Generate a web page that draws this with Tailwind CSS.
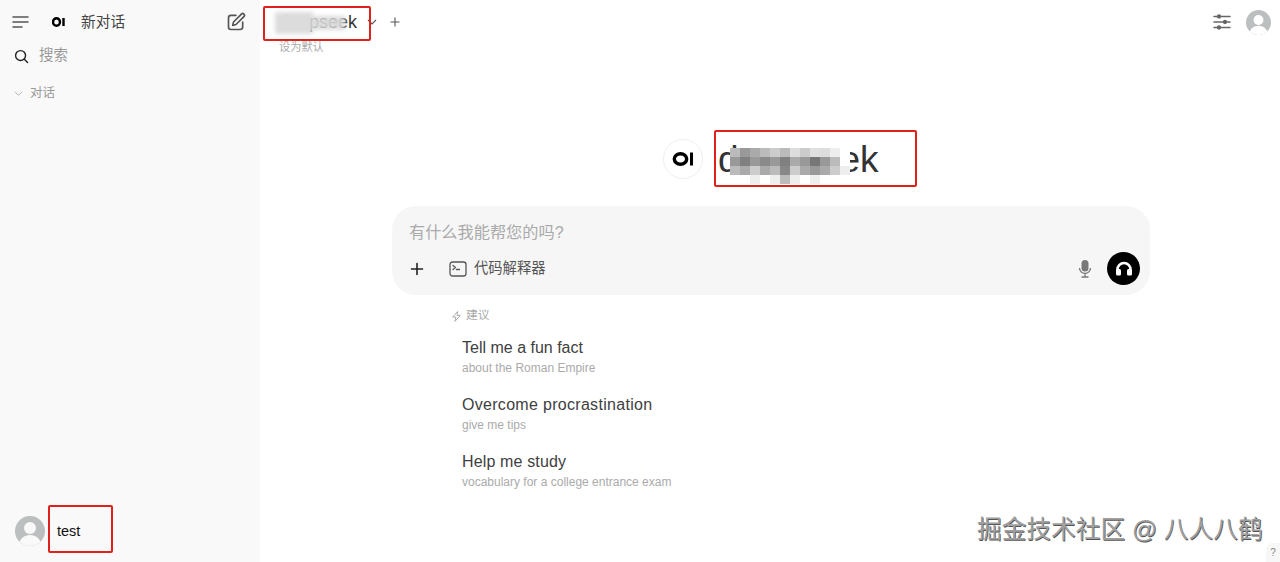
<!doctype html>
<html lang="zh">
<head>
<meta charset="utf-8">
<script src="https://cdn.jsdelivr.net/npm/@tailwindcss/browser@4"></script>
</head>
<body class="bg-white">
<div class="relative flex h-[562px] w-[1280px] overflow-hidden bg-white font-['Liberation_Sans','Noto_Sans_CJK_SC',sans-serif] text-[#333]">
  <aside class="flex w-[260px] shrink-0 flex-col bg-[#f9f9f9]">
    <div class="flex h-[44px] items-center pl-[12px] pr-[14px]">
      <svg class="h-[18px] w-[18px]" viewBox="0 0 18 18" fill="none" stroke="#555" stroke-width="1.500" stroke-linecap="round"><path d="M1 4h15M1 9h15M1 14h9"/></svg>
      <svg class="ml-[22px] h-[10px] w-[14px]" viewBox="0 0 14 10" fill="none"><ellipse cx="4.500" cy="5" rx="3.500" ry="3.700" stroke="#000" stroke-width="2.400"/><path d="M11.500 1v8" stroke="#000" stroke-width="2.400"/></svg>
      <span class="ml-[15px] text-[14.700px] text-[#444]">新对话</span>
      <svg class="ml-auto h-[20px] w-[20px]" viewBox="0 0 24 24" fill="none" stroke="#555" stroke-width="2" stroke-linecap="round" stroke-linejoin="round"><path d="M12 4H6a3 3 0 0 0-3 3v11a3 3 0 0 0 3 3h11a3 3 0 0 0 3-3v-6"/><path d="M18.500 2.500a2.100 2.100 0 0 1 3 3L12 15l-4 1 1-4z"/></svg>
    </div>
    <div class="flex h-[24px] items-center pl-[14px]">
      <svg class="h-[15px] w-[15px]" viewBox="0 0 16 16" fill="none" stroke="#222" stroke-width="1.500" stroke-linecap="round"><circle cx="7" cy="7" r="5.300"/><path d="M11 11l3.500 3.500"/></svg>
      <span class="ml-[10px] text-[14.500px] text-[#999]">搜索</span>
    </div>
    <div class="mt-[13px] flex h-[24px] items-center pl-[14px]">
      <svg class="h-[9px] w-[9px]" viewBox="0 0 10 10" fill="none" stroke="#aaa" stroke-width="1"><path d="M1 3l4 4 4-4"/></svg>
      <span class="ml-[7px] text-[12.500px] text-[#999]">对话</span>
    </div>
    <div class="mt-auto flex h-[60px] items-center pb-[2px] pl-[15px]">
      <svg class="h-[30px] w-[30px]" viewBox="0 0 30 30"><defs><clipPath id="a1"><circle cx="15" cy="15" r="15"/></clipPath></defs><circle cx="15" cy="15" r="15" fill="#bcbfbf"/><g clip-path="url(#a1)" fill="#f9f9f9"><circle cx="15" cy="12" r="6"/><path d="M3 31c1-8 6-12 12-12s11 4 12 12z"/></g></svg>
      <span class="ml-[12px] translate-y-[1px] text-[14.500px] text-[#111]">test</span>
    </div>
  </aside>

  <main class="flex min-w-0 flex-1 flex-col">
    <header class="flex h-[44px] items-center pl-[19px] pr-[9px]">
      <span class="text-[18px] leading-none text-[#333]">deepseek</span>
      <svg class="ml-[10px] h-[10px] w-[10px]" viewBox="0 0 10 10" fill="none" stroke="#555" stroke-width="1.100"><path d="M1 3l4 4 4-4"/></svg>
      <svg class="ml-[13px] h-[10px] w-[10px]" viewBox="0 0 10 10" fill="none" stroke="#555" stroke-width="1.100"><path d="M5 .5v9M.5 5h9"/></svg>
      <svg class="ml-auto h-[18px] w-[18px]" viewBox="0 0 18 18" fill="none" stroke="#666" stroke-width="1.500" stroke-linecap="round"><path d="M1 3.500h16M1 9h16M1 14.500h16"/><circle cx="6" cy="3.500" r="1.400" fill="#666"/><circle cx="12" cy="9" r="1.400" fill="#666"/><circle cx="6" cy="14.500" r="1.400" fill="#666"/></svg>
      <svg class="ml-[15px] h-[25px] w-[25px]" viewBox="0 0 30 30"><defs><clipPath id="a2"><circle cx="15" cy="15" r="15"/></clipPath></defs><circle cx="15" cy="15" r="15" fill="#bcbfbf"/><g clip-path="url(#a2)" fill="#fff"><circle cx="15" cy="12" r="6"/><path d="M3 31c1-8 6-12 12-12s11 4 12 12z"/></g></svg>
    </header>
    <div class="-mt-[4px] pl-[19px] text-[11.200px] leading-[14px] text-[#aaa]">设为默认</div>

    <div class="mt-[80px] flex h-[50px] items-center pl-[403px]">
      <div class="flex h-[40px] w-[40px] items-center justify-center rounded-full border border-[#eee]">
        <svg class="h-[14px] w-[22px]" viewBox="0 0 22 14" fill="none"><ellipse cx="8.500" cy="7" rx="6.200" ry="5.300" stroke="#000" stroke-width="3.400"/><path d="M19.500 .5v13" stroke="#000" stroke-width="3"/></svg>
      </div>
      <span class="ml-[15px] text-[37px] leading-none text-[#333]">deepseek</span>
    </div>

    <div class="ml-[132px] mt-[22px] flex h-[89px] w-[758px] flex-col rounded-[24px] bg-[#f6f6f6] pl-[17px] pr-[10px]">
      <div class="mt-[15px] text-[16.200px] leading-[22px] text-[#aaa]">有什么我能帮您的吗?</div>
      <div class="mt-[9px] flex items-center">
        <svg class="h-[16px] w-[16px]" viewBox="0 0 16 16" fill="none" stroke="#222" stroke-width="1.600" stroke-linecap="round"><path d="M8 2.500v11M2.500 8h11"/></svg>
        <svg class="ml-[24px] h-[18px] w-[18px]" viewBox="0 0 18 18" fill="none" stroke="#555" stroke-width="1.300" stroke-linejoin="round" stroke-linecap="round"><rect x="1" y="2" width="16" height="14" rx="2.500"/><path d="M4 5.500l2.500 2L4 9.500M7.500 9.500h3"/></svg>
        <span class="ml-[7px] text-[14.300px] text-[#555]">代码解释器</span>
        <svg class="ml-auto h-[20px] w-[20px]" viewBox="0 0 20 20" fill="none"><rect x="6.500" y="1" width="7" height="11.500" rx="3.500" fill="#777"/><path d="M4.500 9a5.500 5.500 0 0 0 11 0M10 14.500V18M6.500 18h7" stroke="#777" stroke-width="1.300"/></svg>
        <div class="ml-[12px] flex h-[33px] w-[33px] items-center justify-center rounded-full bg-black">
          <svg class="h-[15px] w-[18px]" viewBox="0 0 18 15" fill="none"><path d="M2.500 11V8.500a6.500 6.500 0 0 1 13 0V11" stroke="#fff" stroke-width="2.600"/><rect x="1" y="8" width="5" height="6.500" rx="1.500" fill="#fff"/><rect x="12" y="8" width="5" height="6.500" rx="1.500" fill="#fff"/></svg>
        </div>
      </div>
    </div>

    <div class="ml-[191px] mt-[12px] flex h-[18px] items-center text-[11.800px] text-[#aaa]">
      <svg class="h-[11px] w-[11px]" viewBox="0 0 10 10" fill="none" stroke="#aaa" stroke-width=".9" stroke-linejoin="round"><path d="M6 .5L1.500 5.500h3L3.500 9.500l5-5.500h-3z"/></svg>
      <span class="ml-[4px]">建议</span>
    </div>
    <ul class="ml-[202px] mt-[12px] flex flex-col gap-[16px]">
      <li><div class="text-[16px] leading-[22px] text-[#404040]">Tell me a fun fact</div><div class="-mt-[1px] text-[12px] leading-[20px] text-[#aaa]">about the Roman Empire</div></li>
      <li><div class="text-[16px] leading-[22px] tracking-[0.300px] text-[#404040]">Overcome procrastination</div><div class="-mt-[1px] text-[12px] leading-[20px] text-[#aaa]">give me tips</div></li>
      <li><div class="text-[16px] leading-[22px] tracking-[0.150px] text-[#404040]">Help me study</div><div class="-mt-[1px] text-[12px] leading-[20px] text-[#aaa]">vocabulary for a college entrance exam</div></li>
    </ul>
  </main>

  <!-- mosaic redactions -->
  <div class="absolute left-[275px] top-[12px] h-[22px] w-[38px] bg-[#dcdcdc] blur-[2px]"></div>
  <div class="absolute left-[311px] top-[16px] h-[14px] w-[34px] bg-[#d8d8d8]/90 blur-[2px]"></div>
  <div class="absolute left-[730px] top-[148px] grid w-[120px] grid-cols-[repeat(12,10px)] auto-rows-[9px] blur-[0.700px]">
    <div class="bg-[#bbb]"></div><div class="bg-[#999]"></div><div class="bg-[#aaa]"></div><div class="bg-[#bbb]"></div><div class="bg-[#ccc]"></div><div class="bg-[#bbb]"></div><div class="bg-[#ddd]"></div><div class="bg-[#ccc]"></div><div class="bg-[#e0e0e0]"></div><div class="bg-[#ddd]"></div><div class="bg-[#eee]"></div><div class="bg-white"></div>
    <div class="bg-[#999]"></div><div class="bg-[#808080]"></div><div class="bg-[#999]"></div><div class="bg-[#8a8a8a]"></div><div class="bg-[#999]"></div><div class="bg-[#808080]"></div><div class="bg-[#aaa]"></div><div class="bg-[#999]"></div><div class="bg-[#777]"></div><div class="bg-[#999]"></div><div class="bg-[#bbb]"></div><div class="bg-white"></div>
    <div class="bg-[#bbb]"></div><div class="bg-[#aaa]"></div><div class="bg-[#ccc]"></div><div class="bg-[#aaa]"></div><div class="bg-[#bbb]"></div><div class="bg-[#888]"></div><div class="bg-[#ccc]"></div><div class="bg-[#aaa]"></div><div class="bg-[#999]"></div><div class="bg-[#aaa]"></div><div class="bg-[#ccc]"></div><div class="bg-[#eee]"></div>
    <div class="bg-white"></div><div class="bg-white"></div><div class="bg-[#eee]"></div><div class="bg-white"></div><div class="bg-[#eee]"></div><div class="bg-[#bbb]"></div><div class="bg-[#eee]"></div><div class="bg-white"></div><div class="bg-[#eee]"></div><div class="bg-white"></div><div class="bg-white"></div><div class="bg-white"></div>
  </div>

  <!-- red annotation boxes -->
  <div class="absolute left-[263px] top-[6px] h-[35px] w-[108px] rounded-[2px] border-2 border-[#e0201b]"></div>
  <div class="absolute left-[714px] top-[130px] h-[57px] w-[203px] rounded-[2px] border-2 border-[#e0201b]"></div>
  <div class="absolute left-[48px] top-[505px] h-[48px] w-[65px] rounded-[2px] border-2 border-[#e0201b]"></div>

  <!-- watermark -->
  <div class="absolute left-[977px] top-[515px] text-[24.700px] leading-[30px] whitespace-nowrap text-[#a0a0a0] [text-shadow:0.700px_0.700px_0.500px_#555]">掘金技术社区 @ 八人八鹤</div>
  <div class="absolute left-[1266px] top-[543px] flex h-[19px] w-[14px] items-center justify-center rounded-tl-[6px] bg-[#f7f7f7] text-[10px] text-[#888]">?</div>
</div>
</body>
</html>
